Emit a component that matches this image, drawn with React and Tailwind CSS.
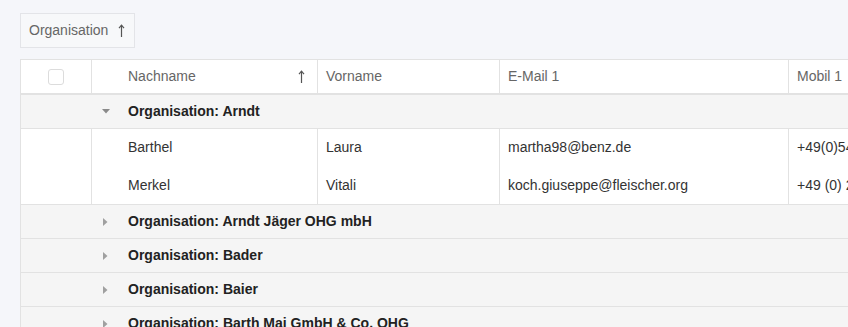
const COLS = 'grid grid-cols-[71px_226px_182px_289px_200px]';

const GROUPS = [
  { name: 'Arndt', open: true, rows: [
    { last: 'Barthel', first: 'Laura', mail: 'martha98@benz.de', mobile: '+49(0)5468 392011' },
    { last: 'Merkel', first: 'Vitali', mail: 'koch.giuseppe@fleischer.org', mobile: '+49 (0) 2045 839201' },
  ] },
  { name: 'Arndt Jäger OHG mbH' },
  { name: 'Bader' },
  { name: 'Baier' },
  { name: 'Barth Mai GmbH & Co. OHG' },
];

function SortArrow() {
  return (
    <svg width="7" height="14" viewBox="0 0 7 14" className="text-[#555]">
      <path d="M3.5 1.5V13" stroke="currentColor" strokeWidth="1.2" fill="none" />
      <path d="M1 4.2L3.5 1.2L6 4.2" stroke="currentColor" strokeWidth="1.2" fill="none" />
    </svg>
  );
}

function GroupRow({ group }) {
  return (
    <div className="flex items-center h-[34px] bg-[#f5f5f5] border-b border-[#e2e2e2]">
      <div className="w-[107px] flex items-center">
        {group.open ? (
          <svg width="8" height="5" viewBox="0 0 8 5" className="ml-[81px]"><path d="M0 0H8L4 4.5Z" fill="#8a8a8a" /></svg>
        ) : (
          <svg width="5" height="8" viewBox="0 0 5 8" className="ml-[82px]"><path d="M0 0V8L4.5 4Z" fill="#a0a0a0" /></svg>
        )}
      </div>
      <span className="font-bold text-[#222]">Organisation: {group.name}</span>
    </div>
  );
}

export default function App() {
  return (
    <div className="w-[848px] h-[327px] overflow-hidden bg-[#f5f6fa] pl-[20px] pt-[13px] text-[14px]" style={{ fontFamily: '"Liberation Sans", Arial, sans-serif' }}>
      {/* Group-by chip */}
      <div className="inline-flex items-center gap-[10px] h-[35px] pl-[8px] pr-[9px] bg-[#f7f8fa] border border-[#e3e4e8] text-[#666]">
        <span>Organisation</span>
        <SortArrow />
      </div>

      {/* Table */}
      <div className="mt-[11px] w-[1000px] bg-white border-l border-t border-[#e2e2e2]">
        <div className={`${COLS} h-[35px] border-b-2 border-[#e2e2e2] text-[#666]`}>
          <div className="flex items-center justify-center border-r border-[#e2e2e2]">
            <div className="w-[16px] h-[16px] rounded-[3px] border border-[#dcdcdc] bg-white" />
          </div>
          <div className="flex items-center justify-between pl-[36px] pr-[12px] border-r border-[#e2e2e2]">
            <span>Nachname</span>
            <SortArrow />
          </div>
          <div className="flex items-center px-[8px] border-r border-[#e2e2e2]">Vorname</div>
          <div className="flex items-center px-[8px] border-r border-[#e2e2e2]">E-Mail 1</div>
          <div className="flex items-center px-[8px]">Mobil 1</div>
        </div>

        {GROUPS.map(group => (
          <div key={group.name}>
            <GroupRow group={group} />
            {group.open && (
              <div className="border-b border-[#e2e2e2] text-[#333]">
                {group.rows.map((row, i) => (
                  <div key={row.last} className={`${COLS} ${i === 0 ? 'h-[37px]' : 'h-[38px]'}`}>
                    <div className="border-r border-[#e2e2e2]" />
                    <div className="flex items-center pl-[36px] border-r border-[#e2e2e2]">{row.last}</div>
                    <div className="flex items-center px-[8px] border-r border-[#e2e2e2]">{row.first}</div>
                    <div className="flex items-center px-[8px] border-r border-[#e2e2e2]">{row.mail}</div>
                    <div className="flex items-center px-[8px] whitespace-nowrap">{row.mobile}</div>
                  </div>
                ))}
              </div>
            )}
          </div>
        ))}
      </div>
    </div>
  );
}
